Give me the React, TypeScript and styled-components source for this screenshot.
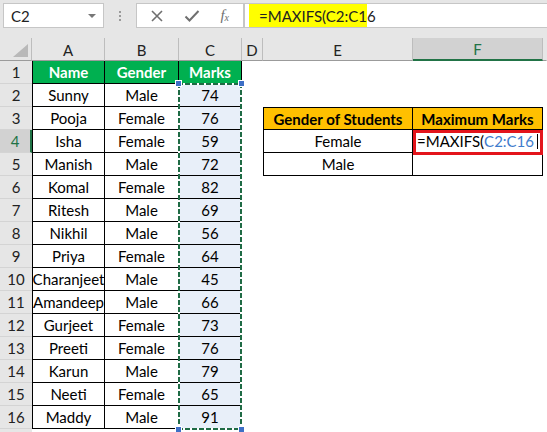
import React from 'react';
import styled, { createGlobalStyle, css } from 'styled-components';

const GlobalStyle = createGlobalStyle`
  * {
    box-sizing: border-box;
  }

  body {
    margin: 0;
    background: #fff;
    font-family: Lato, 'Open Sans', Arial, sans-serif;
    color: #000;
  }
`;

const students: [string, string, number][] = [
  ['Sunny', 'Male', 74],
  ['Pooja', 'Female', 76],
  ['Isha', 'Female', 59],
  ['Manish', 'Male', 72],
  ['Komal', 'Female', 82],
  ['Ritesh', 'Male', 69],
  ['Nikhil', 'Male', 56],
  ['Priya', 'Female', 64],
  ['Charanjeet', 'Male', 45],
  ['Amandeep', 'Male', 66],
  ['Gurjeet', 'Female', 73],
  ['Preeti', 'Female', 76],
  ['Karun', 'Male', 79],
  ['Neeti', 'Female', 65],
  ['Maddy', 'Male', 91],
];

const columns = ['A', 'B', 'C', 'D', 'E', 'F', ''];

type CellKind = 'plain' | 'data' | 'green' | 'gold';

const App: React.FC = () => {
  const renderSideCells = (row: number) => {
    if (row === 3) {
      return (
        <>
          <Cell $kind="gold" $left $top>
            Gender of Students
          </Cell>
          <Cell $kind="gold" $top>
            Maximum Marks
          </Cell>
        </>
      );
    }
    if (row === 4) {
      return (
        <>
          <Cell $kind="data" $left>
            Female
          </Cell>
          <EditCell $kind="data">
            =MAXIFS(<RangeRef>C2:C16</RangeRef>
            <Caret />
          </EditCell>
        </>
      );
    }
    if (row === 5) {
      return (
        <>
          <Cell $kind="data" $left>
            Male
          </Cell>
          <Cell $kind="data" />
        </>
      );
    }
    return (
      <>
        <Cell $kind="plain" />
        <Cell $kind="plain" />
      </>
    );
  };

  return (
    <Page>
      <GlobalStyle />
      <FormulaBar>
        <NameBox>
          C2
          <DropArrow />
        </NameBox>
        <Grip>
          <span />
          <span />
          <span />
        </Grip>
        <ActionBox>
          <svg width="14" height="14" viewBox="0 0 14 14">
            <path d="M2 2 L12 12 M12 2 L2 12" stroke="#6f6f6f" strokeWidth="1.6" fill="none" />
          </svg>
          <svg width="16" height="14" viewBox="0 0 16 14">
            <path d="M1.5 7.5 L5.5 11.5 L14.5 2" stroke="#6f6f6f" strokeWidth="2" fill="none" />
          </svg>
          <FxLabel>
            f<sub>x</sub>
          </FxLabel>
        </ActionBox>
        <FormulaInput>
          <Highlight>=MAXIFS(C2:C16</Highlight>
        </FormulaInput>
      </FormulaBar>

      <Sheet>
        <Corner />
        {columns.map((letter, i) => (
          <ColumnHeader key={i} $active={letter === 'F'} $last={letter === ''}>
            {letter}
          </ColumnHeader>
        ))}

        <RowHeader>1</RowHeader>
        <Cell $kind="green" $left>
          Name
        </Cell>
        <Cell $kind="green">Gender</Cell>
        <Cell $kind="green">Marks</Cell>
        <Cell $kind="plain" />
        <Cell $kind="plain" />
        <Cell $kind="plain" />
        <Cell $kind="plain" />

        {students.map(([name, gender, marks], i) => {
          const row = i + 2;
          return (
            <React.Fragment key={name}>
              <RowHeader $active={row === 4}>{row}</RowHeader>
              <Cell $kind="data" $left>
                {name}
              </Cell>
              <Cell $kind="data">{gender}</Cell>
              <Cell $kind="data" $selected>
                {marks}
              </Cell>
              <Cell $kind="plain" />
              {renderSideCells(row)}
              <Cell $kind="plain" />
            </React.Fragment>
          );
        })}

        {/* row 17 only peeks in at the bottom edge */}
        <RowHeader />

        <MarchingAnts>
          <Handle $x="left" $y="top" />
          <Handle $x="right" $y="top" />
          <Handle $x="left" $y="bottom" />
          <Handle $x="right" $y="bottom" />
        </MarchingAnts>
      </Sheet>
    </Page>
  );
};

const Page = styled.div`
  width: 547px;
  height: 432px;
  overflow: hidden;
  background: #fff;
`;

const FormulaBar = styled.div`
  display: flex;
  align-items: flex-start;
  height: 38px;
  padding: 3px 0 0 3px;
  background: #e6e6e6;
`;

const BarBox = styled.div`
  display: flex;
  align-items: center;
  height: 25px;
  background: #fff;
  border: 1px solid #c6c6c6;
`;

const NameBox = styled(BarBox)`
  position: relative;
  width: 101px;
  padding-left: 7px;
  font-size: 15px;
  color: #222;
`;

const DropArrow = styled.span`
  position: absolute;
  right: 7px;
  top: 10px;
  width: 0;
  height: 0;
  border-left: 4px solid transparent;
  border-right: 4px solid transparent;
  border-top: 4px solid #777;
`;

const Grip = styled.div`
  display: flex;
  flex-direction: column;
  gap: 2px;
  width: 32px;
  padding: 8px 0 0 15px;

  span {
    width: 2px;
    height: 2px;
    background: #9a9a9a;
  }
`;

const ActionBox = styled(BarBox)`
  width: 108px;
  justify-content: space-between;
  padding: 0 14px 0 13px;
`;

const FxLabel = styled.span`
  font-family: 'Liberation Serif', serif;
  font-style: italic;
  font-size: 15px;
  color: #6f6f6f;

  sub {
    font-size: 10px;
    vertical-align: -1px;
  }
`;

const FormulaInput = styled(BarBox)`
  flex: 1;
  align-items: stretch;
  padding-left: 4px;
  border-right: none;
`;

const Highlight = styled.span`
  display: flex;
  align-items: center;
  width: 118px;
  padding-left: 10px;
  background: #ffff00;
  font-size: 15px;
  color: #222;
`;

const Sheet = styled.div`
  position: relative;
  display: grid;
  grid-template-columns: 32px 73px 74px 63px 21px 150px 130px 1fr;
  grid-auto-rows: 23px;
  font-size: 15px;
`;

const Corner = styled.div`
  position: relative;
  background: #e6e6e6;
  border-right: 1px solid #bdbdbd;
  border-bottom: 1px solid #9b9b9b;

  &::after {
    content: '';
    position: absolute;
    right: 3px;
    bottom: 3px;
    width: 15px;
    height: 13px;
    background: #b9b9b9;
    clip-path: polygon(100% 0, 100% 100%, 0 100%);
  }
`;

const ColumnHeader = styled.div<{ $active?: boolean; $last?: boolean }>`
  display: flex;
  align-items: center;
  justify-content: center;
  padding-top: 1px;
  background: #e6e6e6;
  border-right: 1px solid ${({ $last }) => ($last ? 'transparent' : '#bdbdbd')};
  border-bottom: 1px solid #9b9b9b;
  color: #222;

  ${({ $active }) =>
    $active &&
    css`
      background: #d2d2d2;
      color: #217346;
      border-bottom: 2px solid #217346;
    `}
`;

const RowHeader = styled.div<{ $active?: boolean }>`
  display: flex;
  align-items: center;
  justify-content: center;
  background: #e6e6e6;
  border-bottom: 1px solid #d4d4d4;
  color: #222;

  ${({ $active }) =>
    $active &&
    css`
      background: #d2d2d2;
      color: #217346;
      border-right: 2px solid #217346;
    `}
`;

const kindStyles: Record<CellKind, ReturnType<typeof css>> = {
  plain: css`
    background: #fff;
  `,
  data: css`
    background: #fff;
    border-right: 1px solid #000;
    border-bottom: 1px solid #000;
  `,
  green: css`
    background: #00b050;
    color: #fff;
    font-weight: 700;
    border-right: 1px solid #000;
    border-bottom: 1px solid #000;
  `,
  gold: css`
    background: #ffc000;
    font-weight: 700;
    border-right: 1px solid #000;
    border-bottom: 1px solid #000;
  `,
};

const Cell = styled.div<{
  $kind: CellKind;
  $left?: boolean;
  $top?: boolean;
  $selected?: boolean;
}>`
  display: flex;
  align-items: center;
  justify-content: center;
  white-space: nowrap;
  overflow: visible;
  ${({ $kind }) => kindStyles[$kind]}
  ${({ $left }) => $left && 'border-left: 1px solid #000;'}
  ${({ $top }) => $top && 'border-top: 1px solid #000;'}
  ${({ $selected }) => $selected && 'background: #e8eff9;'}
`;

const EditCell = styled(Cell)`
  position: relative;
  justify-content: flex-start;
  padding-left: 4px;

  &::after {
    content: '';
    position: absolute;
    top: 0;
    left: 0;
    right: -1px;
    bottom: -3px;
    border: 3px solid #e3141b;
  }
`;

const RangeRef = styled.span`
  color: #3f7ccd;
`;

const Caret = styled.span`
  width: 1px;
  height: 15px;
  margin-left: 3px;
  background: #000;
`;

const MarchingAnts = styled.div`
  position: absolute;
  left: 178px;
  top: 45px;
  width: 64px;
  height: 347px;
  pointer-events: none;
  background:
    repeating-linear-gradient(90deg, #1f6b45 0 5px, #fff 5px 7px) top / 100% 2px no-repeat,
    repeating-linear-gradient(90deg, #1f6b45 0 5px, #fff 5px 7px) bottom / 100% 2px no-repeat,
    repeating-linear-gradient(180deg, #1f6b45 0 5px, #fff 5px 7px) left / 2px 100% no-repeat,
    repeating-linear-gradient(180deg, #1f6b45 0 5px, #fff 5px 7px) right / 2px 100% no-repeat;
`;

const Handle = styled.span<{ $x: 'left' | 'right'; $y: 'top' | 'bottom' }>`
  position: absolute;
  ${({ $x }) => `${$x}: -3px;`}
  ${({ $y }) => `${$y}: -3px;`}
  width: 7px;
  height: 7px;
  background: #3d6fc6;
  border: 1px solid #fff;
`;

export default App;
